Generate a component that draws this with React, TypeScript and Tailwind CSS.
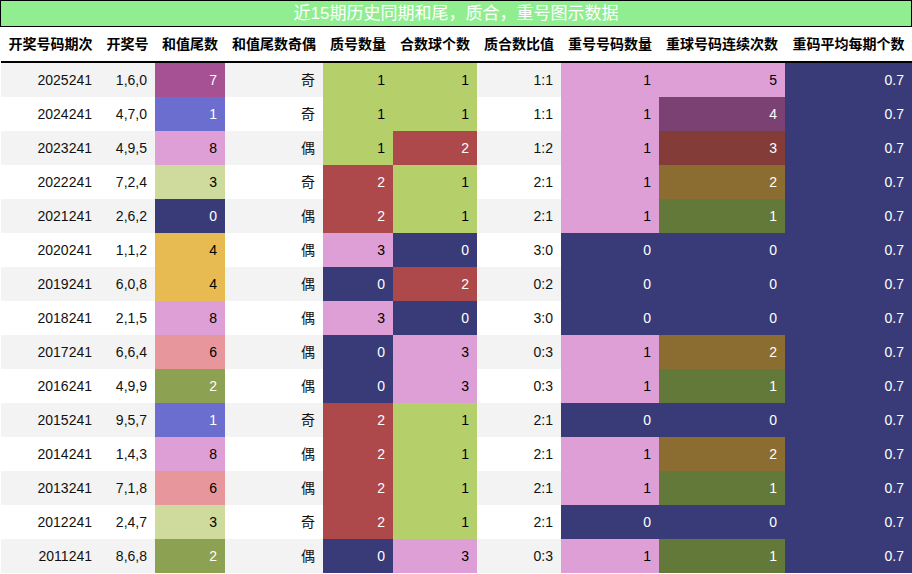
const cols =
  "grid grid-cols-[99px_55px_70px_98px_70px_84px_84px_98px_126px_127px]";

const headers = [
  "开奖号码期次",
  "开奖号",
  "和值尾数",
  "和值尾数奇偶",
  "质号数量",
  "合数球个数",
  "质合数比值",
  "重号号码数量",
  "重球号码连续次数",
  "重码平均每期个数",
];

type Row = [string, string, number, string, number, number, string, number, number];

const rows: Row[] = [
  ["2025241", "1,6,0", 7, "奇", 1, 1, "1:1", 1, 5],
  ["2024241", "4,7,0", 1, "奇", 1, 1, "1:1", 1, 4],
  ["2023241", "4,9,5", 8, "偶", 1, 2, "1:2", 1, 3],
  ["2022241", "7,2,4", 3, "奇", 2, 1, "2:1", 1, 2],
  ["2021241", "2,6,2", 0, "偶", 2, 1, "2:1", 1, 1],
  ["2020241", "1,1,2", 4, "偶", 3, 0, "3:0", 0, 0],
  ["2019241", "6,0,8", 4, "偶", 0, 2, "0:2", 0, 0],
  ["2018241", "2,1,5", 8, "偶", 3, 0, "3:0", 0, 0],
  ["2017241", "6,6,4", 6, "偶", 0, 3, "0:3", 1, 2],
  ["2016241", "4,9,9", 2, "偶", 0, 3, "0:3", 1, 1],
  ["2015241", "9,5,7", 1, "奇", 2, 1, "2:1", 0, 0],
  ["2014241", "1,4,3", 8, "偶", 2, 1, "2:1", 1, 2],
  ["2013241", "7,1,8", 6, "偶", 2, 1, "2:1", 1, 1],
  ["2012241", "2,4,7", 3, "奇", 2, 1, "2:1", 0, 0],
  ["2011241", "8,6,8", 2, "偶", 0, 3, "0:3", 1, 1],
];

// [background class, text class]
const tailColors: Record<number, string> = {
  0: "bg-[#393b79] text-white",
  1: "bg-[#6b6ecf] text-white",
  2: "bg-[#8ca252] text-white",
  3: "bg-[#cedb9c] text-black",
  4: "bg-[#e7ba52] text-black",
  6: "bg-[#e7969c] text-black",
  7: "bg-[#a55194] text-white",
  8: "bg-[#de9ed6] text-black",
};

const countColors: Record<number, string> = {
  0: "bg-[#393b79] text-white",
  1: "bg-[#b5cf6b] text-black",
  2: "bg-[#ad494a] text-white",
  3: "bg-[#de9ed6] text-black",
};

const repeatColors: Record<number, string> = {
  0: "bg-[#393b79] text-white",
  1: "bg-[#de9ed6] text-black",
};

const streakColors: Record<number, string> = {
  0: "bg-[#393b79] text-white",
  1: "bg-[#637939] text-white",
  2: "bg-[#8c6d31] text-white",
  3: "bg-[#843c39] text-white",
  4: "bg-[#7b4173] text-white",
  5: "bg-[#de9ed6] text-black",
};

function Cell({ children, className = "" }: { children: React.ReactNode; className?: string }) {
  return (
    <div className={`flex h-[34px] items-center justify-end pr-2 ${className}`}>
      {children}
    </div>
  );
}

export default function App() {
  return (
    <div
      className="h-[574px] w-[912px] overflow-hidden bg-white text-[14px] text-[#111]"
      style={{ fontFamily: '"Liberation Sans", "Noto Sans CJK SC", sans-serif' }}
    >
      <div className="flex h-[27px] items-center justify-center border border-black bg-[#90ee90] text-[17px] text-white">
        近15期历史同期和尾，质合，重号图示数据
      </div>

      <div className="pl-px">
        <div className={`${cols} h-[36px] border-b-2 border-black font-bold text-black`}>
          {headers.map((h) => (
            <div key={h} className="flex items-center justify-center whitespace-nowrap">
              {h}
            </div>
          ))}
        </div>

        {rows.map((r, i) => (
          <div key={r[0]} className={`${cols} ${i % 2 === 0 ? "bg-[#f3f3f3]" : "bg-white"}`}>
            <Cell>{r[0]}</Cell>
            <Cell>{r[1]}</Cell>
            <Cell className={tailColors[r[2]]}>{r[2]}</Cell>
            <Cell>{r[3]}</Cell>
            <Cell className={countColors[r[4]]}>{r[4]}</Cell>
            <Cell className={countColors[r[5]]}>{r[5]}</Cell>
            <Cell>{r[6]}</Cell>
            <Cell className={repeatColors[r[7]]}>{r[7]}</Cell>
            <Cell className={streakColors[r[8]]}>{r[8]}</Cell>
            <Cell className="bg-[#393b79] text-white">0.7</Cell>
          </div>
        ))}
      </div>
    </div>
  );
}
